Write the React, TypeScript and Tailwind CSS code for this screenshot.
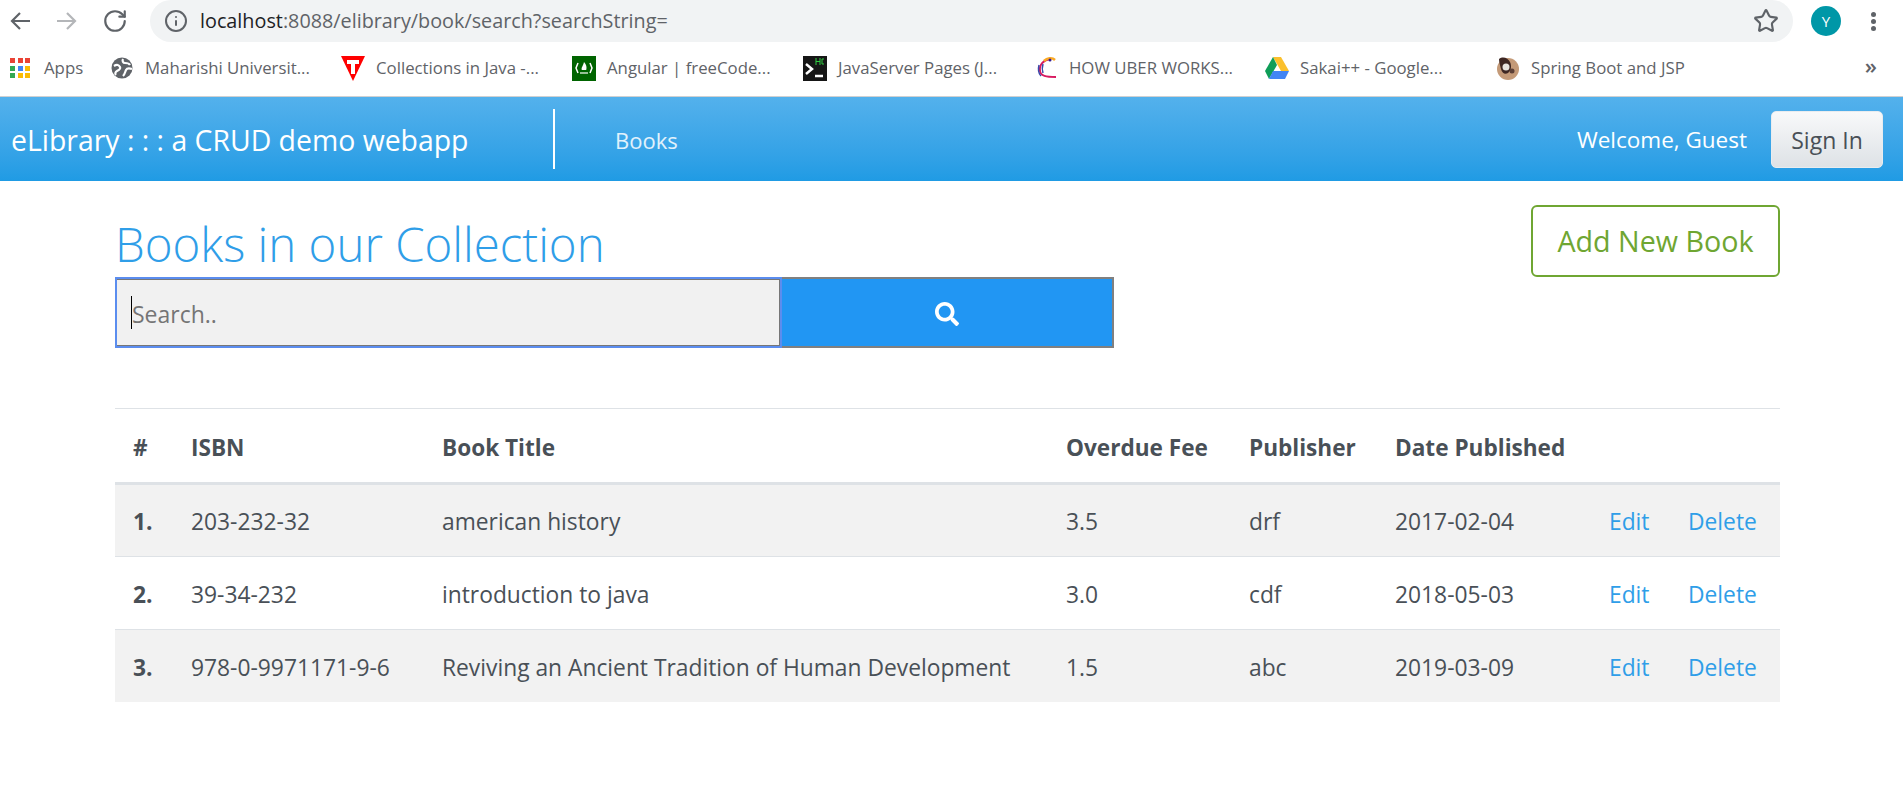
import { Info, RotateCw, Star } from 'lucide-react';
import { FaSearch } from 'react-icons/fa';

const bookmarks = [
  { label: 'Maharishi Universit...', icon: 'globe' },
  { label: 'Collections in Java -...', icon: 'tee' },
  { label: 'Angular | freeCode...', icon: 'fcc' },
  { label: 'JavaServer Pages (J...', icon: 'hc' },
  { label: 'HOW UBER WORKS...', icon: 'uber' },
  { label: 'Sakai++ - Google...', icon: 'drive' },
  { label: 'Spring Boot and JSP', icon: 'spring' },
];

const books = [
  { id: '1.', isbn: '203-232-32', title: 'american history', fee: '3.5', publisher: 'drf', date: '2017-02-04' },
  { id: '2.', isbn: '39-34-232', title: 'introduction to java', fee: '3.0', publisher: 'cdf', date: '2018-05-03' },
  { id: '3.', isbn: '978-0-9971171-9-6', title: 'Reviving an Ancient Tradition of Human Development', fee: '1.5', publisher: 'abc', date: '2019-03-09' },
];

function BookmarkIcon({ name }: { name: string }) {
  if (name === 'globe')
    return (
      <svg width="22" height="22" viewBox="0 0 22 22">
        <circle cx="11" cy="11" r="10.500" fill="#5f6368" />
        <path d="M3 9c3-2 5-1 6 1s-1 3-3 4-2 3-1 4M12 2c-1 2 0 4 2 4s4 0 5 2M21 12c-3-1-5-1-6 1s-1 4-3 6" stroke="#fff" strokeWidth="2.200" fill="none" />
      </svg>
    );
  if (name === 'tee')
    return (
      <svg width="24" height="25" viewBox="0 0 24 25">
        <path d="M0 0h24L12 25z" fill="#f00" />
        <path d="M6 4h12v4h-4v10h-4V8H6z" fill="#fff" />
      </svg>
    );
  if (name === 'fcc')
    return (
      <svg width="24" height="25" viewBox="0 0 24 25">
        <rect width="24" height="25" fill="#006400" />
        <path d="M6 7 4 12l2 5M18 7l2 5-2 5" stroke="#fff" strokeWidth="1.500" fill="none" />
        <path d="M12 6c2.500 3 3 5 2.200 8H9.800C9 11.500 11 10.500 12 6z" fill="#fff" />
        <path d="M8 17h8" stroke="#fff" strokeWidth="1.200" />
      </svg>
    );
  if (name === 'hc')
    return (
      <svg width="24" height="25" viewBox="0 0 24 25">
        <rect width="24" height="25" fill="#161616" />
        <path d="M3 8l6 5-6 5" stroke="#fff" strokeWidth="2.500" fill="none" />
        <path d="M12 20h8" stroke="#fff" strokeWidth="2.500" />
        <path d="M13 2v7M17 2v7M13 5.500h4M21 3h-2v5h2" stroke="#2ecc40" strokeWidth="1" fill="none" />
      </svg>
    );
  if (name === 'uber')
    return (
      <svg width="24" height="25" viewBox="0 0 24 25">
        <path d="M17 3C9 4 5 9 6 15c.500 5 6 6 16 6" stroke="#d81b60" strokeWidth="2" fill="none" />
        <path d="M10 5c3-3 8-4 11-1" stroke="#f9a825" strokeWidth="2.500" fill="none" />
        <path d="M5 9c-1 4-1 8 2 11M9 8c-1 3-1 6 0 9" stroke="#3949ab" strokeWidth="1.500" fill="none" />
        <circle cx="16" cy="4" r="1.500" fill="#311b92" />
      </svg>
    );
  if (name === 'drive')
    return (
      <svg width="24" height="22" viewBox="0 0 24 22">
        <path d="M8 0h8l8 14h-8z" fill="#fbc02d" />
        <path d="M8 0 0 14l4 8 8-14z" fill="#0f9d58" />
        <path d="M4 22h16l4-8H8z" fill="#4285f4" />
      </svg>
    );
  return (
    <svg width="24" height="24" viewBox="0 0 24 24">
      <circle cx="12" cy="13" r="11" fill="#c49a78" />
      <path d="M3 3c4-3 9-1 11 3s1 9-2 11-6 0-7-4-2-7-2-10z" fill="#3e2723" />
      <circle cx="10" cy="11" r="3.500" fill="#e8e4df" />
      <circle cx="16" cy="15" r="2.500" fill="#5d4037" />
    </svg>
  );
}

function AppsIcon() {
  const colors = ['#ea4335', '#ea4335', '#ea4335', '#34a853', '#4285f4', '#fbbc04', '#34a853', '#fbbc04', '#fbbc04'];
  return (
    <div className="grid grid-cols-[5px_5px_5px] gap-[2.500px]">
      {colors.map((color, i) => (
        <span key={i} className="size-[5px]" style={{ backgroundColor: color }} />
      ))}
    </div>
  );
}

export default function App() {
  return (
    <div className="h-[798px] overflow-hidden bg-white font-['Open_Sans','Noto_Sans',sans-serif] text-[#495057]">
      <div className="flex h-[42px] items-center">
        <div className="flex w-[150px] items-center gap-[27px] pl-[10px] text-[#5f6368]">
          <svg width="20" height="18" viewBox="0 0 20 18" fill="none" stroke="currentColor" strokeWidth="2.200">
            <path d="M20 9H2M10 1 2 9l8 8" />
          </svg>
          <svg width="20" height="18" viewBox="0 0 20 18" fill="none" stroke="#b4b6b9" strokeWidth="2.200">
            <path d="M0 9h18M10 1l8 8-8 8" />
          </svg>
          <RotateCw size={26} strokeWidth={2} className="-ml-[2px]" />
        </div>
        <div className="flex h-[42px] w-[1643px] items-center justify-between rounded-[21px] bg-[#f1f3f4] pl-[14px] pr-[14px]">
          <div className="flex items-center gap-[12px]">
            <Info size={24} strokeWidth={2} className="text-[#5f6368]" />
            <span className="text-[19.800px] text-[#5f6368]">
              <span className="text-[#202124]">localhost</span>:8088/elibrary/book/search?searchString=
            </span>
          </div>
          <Star size={26} strokeWidth={2} className="text-[#5f6368]" />
        </div>
        <div className="ml-[18px] flex size-[30px] items-center justify-center rounded-full bg-[#0097a7] text-[15px] text-white">Y</div>
        <div className="ml-[30px] flex flex-col gap-[2px]">
          <span className="size-[5px] rounded-full bg-[#5f6368]" />
          <span className="size-[5px] rounded-full bg-[#5f6368]" />
          <span className="size-[5px] rounded-full bg-[#5f6368]" />
        </div>
      </div>

      <div className="flex h-[55px] items-center border-b border-[#cfd0d1] pb-[2px] text-[16.800px] text-[#5f6368]">
        <div className="flex w-[110px] items-center gap-[14px] pl-[10px]">
          <AppsIcon />
          <span>Apps</span>
        </div>
        {bookmarks.map((item) => (
          <div key={item.label} className="flex w-[231px] items-center gap-[11px]">
            <div className="flex w-[24px] justify-center">
              <BookmarkIcon name={item.icon} />
            </div>
            <span className="whitespace-nowrap">{item.label}</span>
          </div>
        ))}
        <span className="ml-auto mb-[6px] mr-[26px] text-[22px] leading-none font-semibold">»</span>
      </div>

      <nav className="flex h-[84px] items-center bg-gradient-to-b from-[#53b1ec] to-[#1f9be4] pl-[11px] pr-[20px] text-white *:pt-[2px]">
        <div className="w-[542px] whitespace-nowrap text-[28.400px]">eLibrary : : : a CRUD demo webapp</div>
        <div className="h-[60px] w-[2px] bg-white" />
        <div className="ml-[60px] text-[22px] text-white/85">Books</div>
        <div className="ml-auto text-[22.500px]">Welcome, Guest</div>
        <button className="ml-[24px] h-[57px] w-[112px] rounded-[5px] border border-[#e9ecef] bg-gradient-to-b from-[#f8f9fa] to-[#dee2e6] text-[23px] text-[#495057]">
          Sign In
        </button>
      </nav>

      <main className="pl-[115px] pr-[123px]">
        <div className="flex items-start justify-between pt-[24px]">
          <div>
            <h1 className="pt-[5px] text-[47.400px] font-light leading-[67px] text-[#2f9ee8]">Books in our Collection</h1>
            <div className="flex h-[71px] w-[999px]">
              <div className="flex w-[667px] items-center border-2 border-[#5b8def] bg-[#f1f1f1] pl-[14px] shadow-[inset_0_1px_0_#777,inset_0_-1px_0_#777,inset_-1px_0_0_#777]">
                <span className="h-[33px] w-px bg-black" />
                <input placeholder="Search.." className="w-full bg-transparent pt-[4px] text-[23px] outline-none placeholder:text-[#757575]" />
              </div>
              <button className="flex w-[332px] items-center justify-center border-2 border-l-0 border-[#808080] bg-[#2196f3] pt-[2px] text-white">
                <FaSearch size={24} />
              </button>
            </div>
          </div>
          <button className="h-[72px] w-[249px] rounded-[6px] border-2 border-[#6fa632] text-[28.700px] text-[#6fa632]">Add New Book</button>
        </div>

        <table className="mt-[60px] w-full table-fixed border-t border-[#dee2e6] text-[22.800px]">
          <colgroup>
            <col className="w-[76px]" />
            <col className="w-[251px]" />
            <col className="w-[624px]" />
            <col className="w-[183px]" />
            <col className="w-[146px]" />
            <col className="w-[214px]" />
            <col className="w-[79px]" />
            <col className="w-[92px]" />
          </colgroup>
          <thead className="border-b-[3px] border-[#dee2e6] text-left text-[22.600px] font-bold">
            <tr className="h-[75px] *:pt-[4px]">
              <th className="pl-[18px]">#</th>
              <th>ISBN</th>
              <th>Book Title</th>
              <th>Overdue Fee</th>
              <th>Publisher</th>
              <th colSpan={3}>Date Published</th>
            </tr>
          </thead>
          <tbody>
            {books.map((book, i) => (
              <tr key={book.id} className={`h-[73px] border-b border-[#dee2e6] last:h-[72px] last:border-b-0 *:pt-[4px] ${i % 2 === 1 ? 'bg-white' : 'bg-[#f2f2f2]'}`}>
                <td className="pl-[18px] font-bold">{book.id}</td>
                <td>{book.isbn}</td>
                <td className="whitespace-nowrap">{book.title}</td>
                <td>{book.fee}</td>
                <td>{book.publisher}</td>
                <td>{book.date}</td>
                <td className="text-[#2f9ee8]">Edit</td>
                <td className="text-[#2f9ee8]">Delete</td>
              </tr>
            ))}
          </tbody>
        </table>
      </main>
    </div>
  );
}
